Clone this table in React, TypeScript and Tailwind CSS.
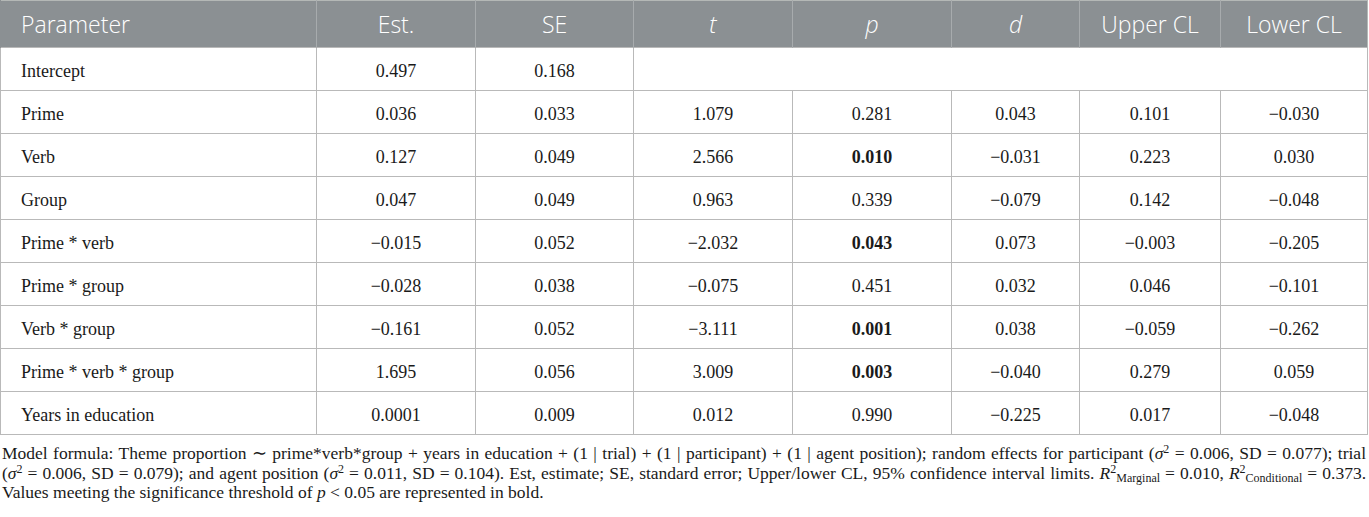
import React from "react";

type Row = {
  name: string;
  est: string;
  se: string;
  t?: string;
  p?: string;
  pBold?: boolean;
  d?: string;
  u?: string;
  l?: string;
};

const rows: Row[] = [
  { name: "Intercept", est: "0.497", se: "0.168" },
  { name: "Prime", est: "0.036", se: "0.033", t: "1.079", p: "0.281", d: "0.043", u: "0.101", l: "\u22120.030" },
  { name: "Verb", est: "0.127", se: "0.049", t: "2.566", p: "0.010", pBold: true, d: "\u22120.031", u: "0.223", l: "0.030" },
  { name: "Group", est: "0.047", se: "0.049", t: "0.963", p: "0.339", d: "\u22120.079", u: "0.142", l: "\u22120.048" },
  { name: "Prime * verb", est: "\u22120.015", se: "0.052", t: "\u22122.032", p: "0.043", pBold: true, d: "0.073", u: "\u22120.003", l: "\u22120.205" },
  { name: "Prime * group", est: "\u22120.028", se: "0.038", t: "\u22120.075", p: "0.451", d: "0.032", u: "0.046", l: "\u22120.101" },
  { name: "Verb * group", est: "\u22120.161", se: "0.052", t: "\u22123.111", p: "0.001", pBold: true, d: "0.038", u: "\u22120.059", l: "\u22120.262" },
  { name: "Prime * verb * group", est: "1.695", se: "0.056", t: "3.009", p: "0.003", pBold: true, d: "\u22120.040", u: "0.279", l: "0.059" },
  { name: "Years in education", est: "0.0001", se: "0.009", t: "0.012", p: "0.990", d: "\u22120.225", u: "0.017", l: "\u22120.048" },
];

const td = "border border-[#b9b9b9] h-[43px] pt-[3px] text-center align-middle";
const th = "border-l border-[#a7abad] h-[47px] text-center align-middle font-light";

export default function App() {
  return (
    <div className="w-[1369px] h-[517px] bg-white text-[#1a1a1a] overflow-hidden">
      <table className="border-collapse table-fixed w-[1367px] border border-[#b4b8b6]">
        <colgroup>
          <col className="w-[316px]" />
          <col className="w-[159px]" />
          <col className="w-[158px]" />
          <col className="w-[159px]" />
          <col className="w-[159px]" />
          <col className="w-[128px]" />
          <col className="w-[141px]" />
          <col className="w-[147px]" />
        </colgroup>
        <thead>
          <tr className="bg-[#8b9093] text-white font-['Open_Sans',sans-serif] text-[23px] leading-none">
            <th className="h-[47px] text-left pl-[20px] align-middle font-light border-l border-[#8b9093]">Parameter</th>
            <th className={th}>Est.</th>
            <th className={th}>SE</th>
            <th className={th}><i>t</i></th>
            <th className={th}><i>p</i></th>
            <th className={th}><i>d</i></th>
            <th className={th}>Upper CL</th>
            <th className={th}>Lower CL</th>
          </tr>
        </thead>
        <tbody className="font-['Liberation_Serif',serif] text-[18px] leading-none">
          {rows.map((r) => (
            <tr key={r.name}>
              <td className="border border-[#b9b9b9] h-[43px] pt-[3px] pl-[20px] text-left align-middle">{r.name}</td>
              <td className={td}>{r.est}</td>
              <td className={td}>{r.se}</td>
              {r.t === undefined ? (
                <td className={td} colSpan={5}></td>
              ) : (
                <>
                  <td className={td}>{r.t}</td>
                  <td className={td + (r.pBold ? " font-bold" : "")}>{r.p}</td>
                  <td className={td}>{r.d}</td>
                  <td className={td}>{r.u}</td>
                  <td className={td}>{r.l}</td>
                </>
              )}
            </tr>
          ))}
        </tbody>
      </table>
      <div className="mt-[9px] pl-[2px] pr-[3px] font-['Liberation_Serif',serif] text-[17.5px] leading-[19.5px] text-[#1a1a1a]">
        <div className="whitespace-nowrap text-justify [text-align-last:justify]">
          Model formula: Theme proportion ∼ prime*verb*group + years in education + (1 | trial) + (1 | participant) + (1 | agent position); random effects for participant (<i>σ</i>
          <sup className="text-[12px]">2</sup> = 0.006, SD = 0.077); trial
        </div>
        <div className="whitespace-nowrap text-justify [text-align-last:justify]">
          (<i>σ</i>
          <sup className="text-[12px]">2</sup> = 0.006, SD = 0.079); and agent position (<i>σ</i>
          <sup className="text-[12px]">2</sup> = 0.011, SD = 0.104). Est, estimate; SE, standard error; Upper/lower CL, 95% confidence interval limits. <i>R</i>
          <sup className="text-[12px]">2</sup>
          <sub className="text-[12px]">Marginal</sub> = 0.010, <i>R</i>
          <sup className="text-[12px]">2</sup>
          <sub className="text-[12px]">Conditional</sub> = 0.373.
        </div>
        <div className="whitespace-nowrap">
          Values meeting the significance threshold of <i>p</i> &lt; 0.05 are represented in bold.
        </div>
      </div>
    </div>
  );
}
